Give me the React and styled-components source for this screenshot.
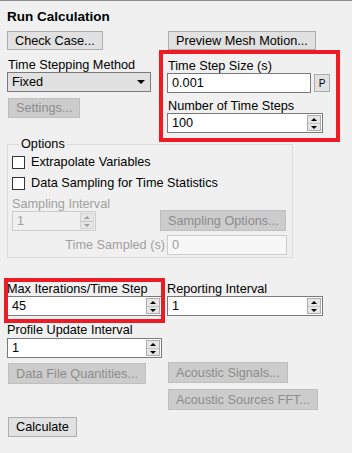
import styled, { createGlobalStyle } from "styled-components";

const Global = createGlobalStyle`
  html, body {
    margin: 0;
    padding: 0;
    background: #f0f0f0;
  }
`;

const Panel = styled.div`
  position: relative;
  width: 352px;
  height: 453px;
  box-sizing: border-box;
  border-top: 1px solid #8c8c8c;
  background: #f0f0f0;
  font-family: "Liberation Sans", Arial, sans-serif;
  font-size: 12.7px;
  color: #000;
  padding: 9px 0 0 7px;
  overflow: hidden;
`;

const Title = styled.div`
  font-weight: bold;
  font-size: 13.5px;
  height: 14px;
  line-height: 14px;
  margin-bottom: 7px;
`;

const Grid = styled.div`
  display: grid;
  grid-template-columns: 160px 1fr;
  margin-top: ${(p) => p.$top || 0}px;
`;

const Col = styled.div`
  display: flex;
  flex-direction: column;
  align-items: flex-start;
`;

const Button = styled.button`
  box-sizing: border-box;
  height: ${(p) => p.$h || 20}px;
  width: ${(p) => (p.$w ? p.$w + "px" : "auto")};
  padding: 0 7px;
  margin: ${(p) => p.$m || "0"};
  font-family: inherit;
  font-size: 12.7px;
  border: 1px solid ${(p) => (p.disabled ? "#bfbfbf" : "#adadad")};
  background: ${(p) => (p.disabled ? "#cccccc" : "#e1e1e1")};
  color: ${(p) => (p.disabled ? "#8d8d8d" : "#000")};
  border-radius: 0;
  white-space: nowrap;
`;

const Label = styled.div`
  height: 14px;
  line-height: 14px;
  color: ${(p) => (p.$disabled ? "#a0a0a0" : "#000")};
  margin: ${(p) => p.$m || "0"};
  white-space: nowrap;
`;

const Box = styled.div`
  box-sizing: border-box;
  display: flex;
  align-items: center;
  width: ${(p) => p.$w}px;
  height: ${(p) => p.$h || 20}px;
  border: 1px solid ${(p) => (p.$disabled ? "#cccccc" : "#7a7a7a")};
  background: ${(p) =>
    p.$disabled ? (p.$light ? "#f7f7f7" : "#f0f0f0") : p.$grey ? "#e1e1e1" : "#fff"};
  color: ${(p) => (p.$disabled ? "#a0a0a0" : "#000")};
  margin: ${(p) => p.$m || "0"};
`;

const Value = styled.div`
  flex: 1;
  padding-left: 4px;
  line-height: 16px;
`;

const Spinner = styled.div`
  box-sizing: border-box;
  width: 14px;
  height: 16px;
  margin-right: 1px;
  display: grid;
  grid-template-rows: 1fr 1fr;
  border: 1px solid ${(p) => (p.$disabled ? "#d4d4d4" : "#adadad")};
  background: #e6e6e6;
`;

const Half = styled.div`
  display: flex;
  align-items: center;
  justify-content: center;
  border-top: ${(p) => (p.$down ? "1px solid #c4c4c4" : "none")};
  &::after {
    content: "";
    border-left: 3px solid transparent;
    border-right: 3px solid transparent;
    ${(p) => (p.$down ? "border-top" : "border-bottom")}: 3px solid
      ${(p) => (p.$disabled ? "#a0a0a0" : "#000")};
  }
`;

const Arrow = styled.div`
  width: 0;
  height: 0;
  margin-right: 5px;
  border-left: 4px solid transparent;
  border-right: 4px solid transparent;
  border-top: 4px solid #000;
`;

const Row = styled.div`
  display: flex;
  align-items: center;
  justify-content: ${(p) => (p.$end ? "flex-end" : "flex-start")};
  gap: ${(p) => p.$gap || 0}px;
  margin: ${(p) => p.$m || "0"};
`;

const SmallBtn = styled.button`
  box-sizing: border-box;
  width: 16px;
  height: 18px;
  padding: 0;
  font-family: inherit;
  font-size: 10px;
  border: 1px solid #adadad;
  background: #e1e1e1;
`;

const Group = styled.fieldset`
  box-sizing: border-box;
  width: 286px;
  height: 120px;
  margin: 5px 0 0 0;
  padding: 5px 5px 0 4px;
  border: 1px solid #dcdcdc;
  legend {
    padding: 0 2px;
    margin-left: 7px;
    line-height: 12px;
  }
`;

const Check = styled.label`
  display: flex;
  align-items: center;
  height: 14px;
  margin-bottom: 7px;
  white-space: nowrap;
  span {
    box-sizing: border-box;
    width: 13px;
    height: 13px;
    border: 1px solid #333;
    background: #fff;
    margin-right: 6px;
  }
`;

const SampleGrid = styled.div`
  display: grid;
  grid-template-columns: 148px 1fr;
  align-items: end;
`;

const Mark = styled.div`
  position: absolute;
  box-sizing: border-box;
  border: 4px solid #ed1c24;
  left: ${(p) => p.$x}px;
  top: ${(p) => p.$y}px;
  width: ${(p) => p.$w}px;
  height: ${(p) => p.$h}px;
  pointer-events: none;
`;

function SpinBox({ w, value, disabled, m }) {
  return (
    <Box $w={w} $disabled={disabled} $m={m}>
      <Value>{value}</Value>
      <Spinner $disabled={disabled}>
        <Half $disabled={disabled} />
        <Half $down $disabled={disabled} />
      </Spinner>
    </Box>
  );
}

export default function App() {
  return (
    <>
      <Global />
      <Panel>
        <Title>Run Calculation</Title>
        <Grid>
          <Col>
            <Button $h={19}>Check Case...</Button>
            <Label $m="8px 0 0 1px">Time Stepping Method</Label>
            <Box $w={144} $grey>
              <Value>Fixed</Value>
              <Arrow />
            </Box>
            <Button disabled $m="6px 0 0 1px">Settings...</Button>
          </Col>
          <Col>
            <Button $h={19} $m="0 0 0 1px">Preview Mesh Motion...</Button>
            <Label $m="9px 0 0 1px">Time Step Size (s)</Label>
            <Row $gap={3}>
              <Box $w={144} $h={20}>
                <Value>0.001</Value>
              </Box>
              <SmallBtn>P</SmallBtn>
            </Row>
            <Label $m="6px 0 0 1px">Number of Time Steps</Label>
            <SpinBox w={156} value="100" />
          </Col>
        </Grid>

        <Group>
          <legend>Options</legend>
          <Check><span />Extrapolate Variables</Check>
          <Check><span />Data Sampling for Time Statistics</Check>
          <SampleGrid>
            <div>
              <Label $disabled>Sampling Interval</Label>
              <SpinBox w={84} value="1" disabled />
            </div>
            <Button disabled $h={21} $w={126}>
              Sampling Options...
            </Button>
          </SampleGrid>
          <Row $end $m="4px 0 0 0">
            <Label $disabled $m="0 2px 0 0">Time Sampled (s)</Label>
            <Box $w={120} $disabled $light>
              <Value>0</Value>
            </Box>
          </Row>
        </Group>

        <Grid $top={24}>
          <Col>
            <Label>Max Iterations/Time Step</Label>
            <SpinBox w={155} value="45" />
            <Label $m="7px 0 0 0">Profile Update Interval</Label>
            <SpinBox w={155} value="1" m="1px 0 0 0" />
            <Button disabled $h={21} $m="5px 0 0 1px">Data File Quantities...</Button>
          </Col>
          <Col>
            <Label>Reporting Interval</Label>
            <SpinBox w={156} value="1" />
            <Button disabled $h={21} $m="46px 0 0 1px">Acoustic Signals...</Button>
            <Button disabled $h={21} $m="6px 0 0 1px">Acoustic Sources FFT...</Button>
          </Col>
        </Grid>
        <Button $m="7px 0 0 1px">Calculate</Button>

        <Mark $x={159} $y={49} $w={181} $h={92} />
        <Mark $x={4} $y={277} $w={161} $h={45} />
      </Panel>
    </>
  );
}
